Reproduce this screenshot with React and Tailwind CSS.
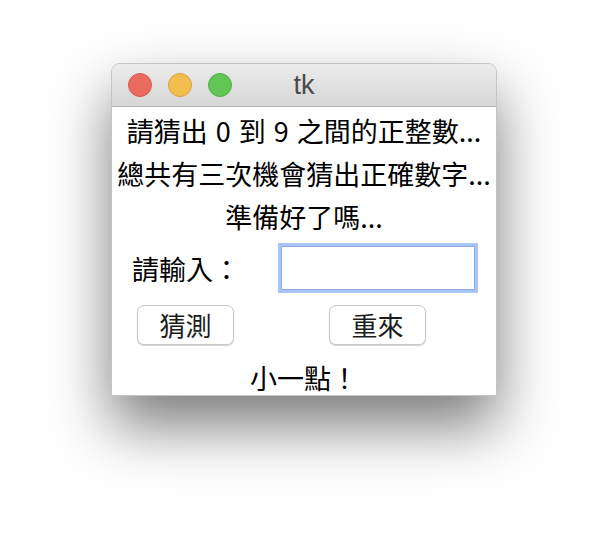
import React from "react";

const cjk = "font-['Noto_Sans_CJK_TC','Noto_Sans_CJK_SC',sans-serif]";

// macOS-style traffic light button
const Light = ({ className }) => (
  <span className={`block w-[24px] h-[24px] rounded-full border ${className}`} />
);

const MacButton = ({ children, className = "" }) => (
  <button
    className={`h-[40px] w-[97px] rounded-[7px] border border-[#c9c9c9] bg-white text-[26px] leading-none text-[#1c1c1c] shadow-[0_1px_1px_rgba(0,0,0,0.18)] flex items-center justify-center ${className}`}
  >
    {children}
  </button>
);

const App = () => {
  return (
    <div className="w-[608px] h-[556px] bg-white pt-[63px] pl-[111px] overflow-hidden">
      <div className="w-[386px] h-[333px] bg-white rounded-t-[9px] overflow-hidden border border-[#c4c4c4] shadow-[0_30px_60px_rgba(0,0,0,0.52)] flex flex-col">
        {/* Title bar */}
        <div className="relative h-[43px] shrink-0 bg-gradient-to-b from-[#ececec] to-[#d6d6d6] border-b border-[#b3b3b3] flex items-center">
          <div className="flex gap-[16px] pl-[16px]">
            <Light className="bg-[#ec6b5f] border-[#d5594d]" />
            <Light className="bg-[#f4be4f] border-[#d9a23f]" />
            <Light className="bg-[#62c655] border-[#52ad45]" />
          </div>
          <span className="absolute inset-x-0 top-0 h-full flex items-center justify-center text-[27px] text-[#4b4b4b] font-['Liberation_Sans',sans-serif] pointer-events-none">
            tk
          </span>
        </div>

        {/* Body */}
        <div className={`flex flex-col pt-[2px] text-black ${cjk}`}>
          <div className="h-[43px] flex items-center justify-center text-[27px] leading-none whitespace-nowrap [word-spacing:2px]">
            請猜出 0 到 9 之間的正整數...
          </div>
          <div className="h-[43px] flex items-center justify-center text-[27px] leading-none whitespace-nowrap">
            總共有三次機會猜出正確數字...
          </div>
          <div className="h-[43px] flex items-center justify-center text-[27px] leading-none whitespace-nowrap">
            準備好了嗎...
          </div>

          <div className="mt-[5px] flex items-center h-[50px]">
            <span className="ml-[20px] text-[27px] leading-none">請輸入：</span>
            <div className="ml-auto mr-[18px] w-[200px] h-[50px] border-[3px] border-[#a9c5f5] bg-white p-0">
              <div className="w-full h-full border border-[#8ea9dc]" />
            </div>
          </div>

          <div className="mt-[12px] flex">
            <MacButton className="ml-[25px]">猜測</MacButton>
            <MacButton className="ml-[95px]">重來</MacButton>
          </div>

          <div className="mt-[11px] h-[43px] flex items-center justify-center text-[27px] leading-none">
            小一點！
          </div>
        </div>
      </div>
    </div>
  );
};

export default App;
